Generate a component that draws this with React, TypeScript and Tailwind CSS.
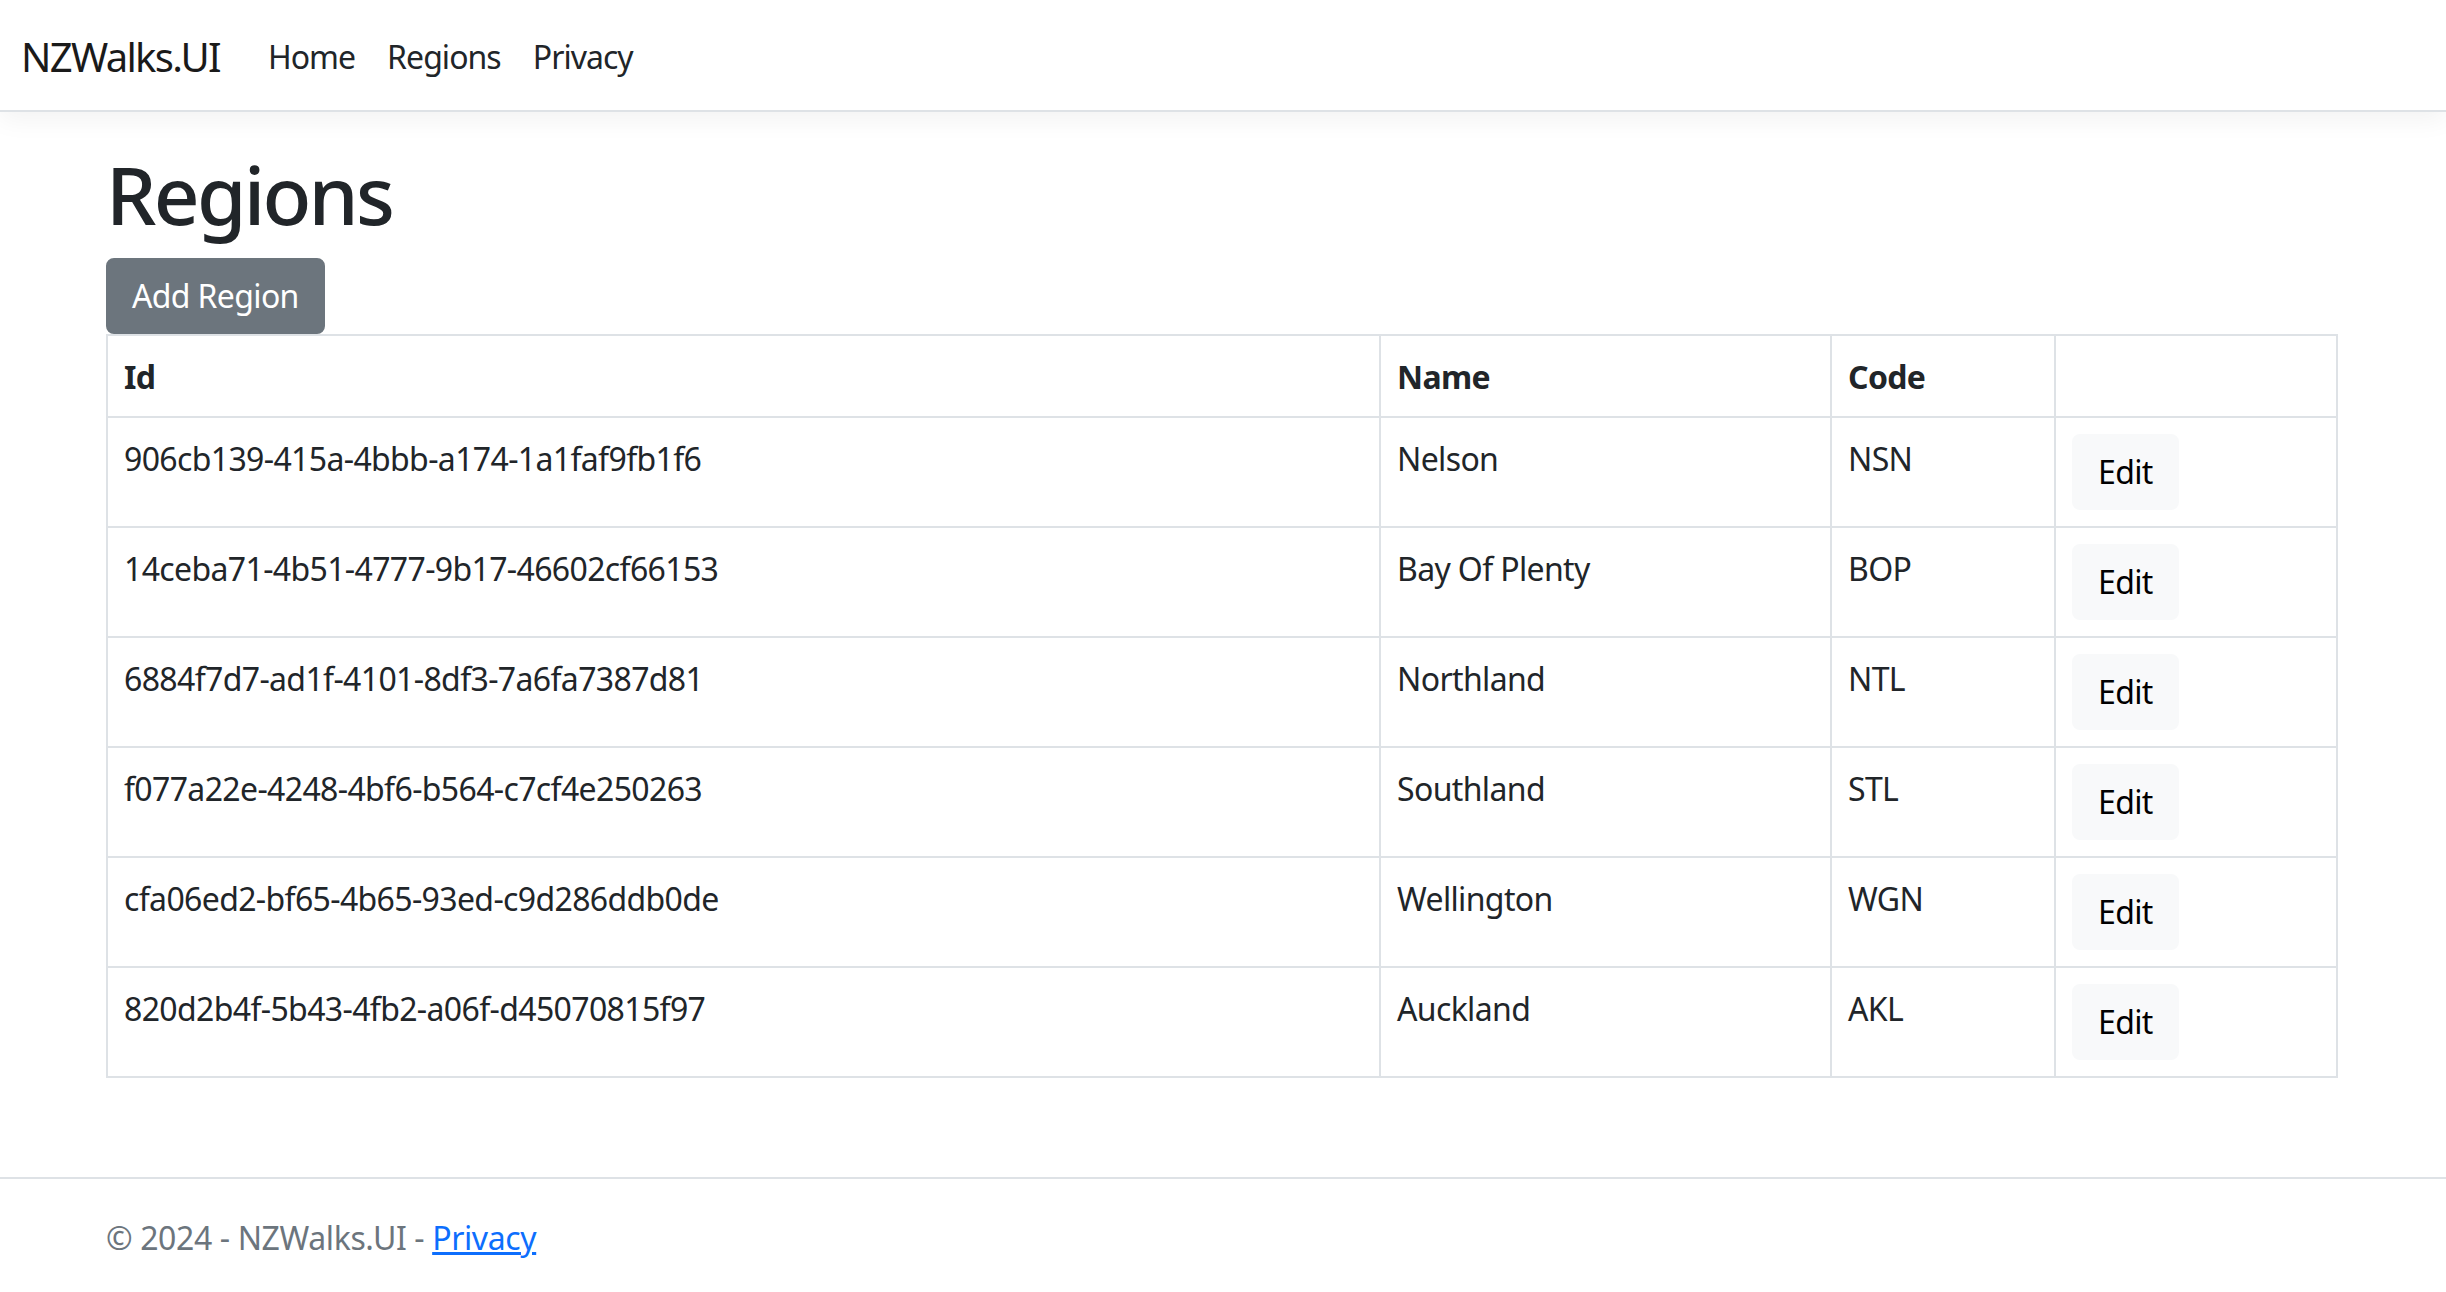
import React from 'react';

type Region = { id: string; name: string; code: string };

const regions: Region[] = [
  { id: '906cb139-415a-4bbb-a174-1a1faf9fb1f6', name: 'Nelson', code: 'NSN' },
  { id: '14ceba71-4b51-4777-9b17-46602cf66153', name: 'Bay Of Plenty', code: 'BOP' },
  { id: '6884f7d7-ad1f-4101-8df3-7a6fa7387d81', name: 'Northland', code: 'NTL' },
  { id: 'f077a22e-4248-4bf6-b564-c7cf4e250263', name: 'Southland', code: 'STL' },
  { id: 'cfa06ed2-bf65-4b65-93ed-c9d286ddb0de', name: 'Wellington', code: 'WGN' },
  { id: '820d2b4f-5b43-4fb2-a06f-d45070815f97', name: 'Auckland', code: 'AKL' },
];

const App: React.FC = () => {
  return (
    <div className="min-h-screen flex flex-col bg-white text-[#212529] font-['Noto_Sans',sans-serif] text-[32px] leading-[48px] tracking-[-0.02em]">
      {/* Top navbar */}
      <header className="h-[112px] shrink-0 flex items-center pt-[3px] pl-[21px] bg-white border-b-2 border-[#dee2e6] shadow-[0_8px_24px_rgba(0,0,0,0.05)]">
        <a href="#" className="text-[40px] leading-[60px] mr-[32px] text-[#1a1a1a] tracking-[-0.042em]">
          NZWalks.UI
        </a>
        <nav className="flex items-center tracking-[-0.03em]">
          <a href="#" className="px-[16px] text-[#212529]">Home</a>
          <a href="#" className="px-[16px] text-[#212529]">Regions</a>
          <a href="#" className="px-[16px] text-[#212529]">Privacy</a>
        </nav>
      </header>

      <main className="pl-[106px] pt-[34px] pb-[32px]">
        <h1 className="text-[80px] leading-[96px] font-medium mb-[16px] tracking-[-0.035em]">Regions</h1>

        <button
          type="button"
          className="h-[76px] px-[24px] bg-[#6c757d] border-2 border-[#6c757d] rounded-[8px] text-white"
        >
          Add Region
        </button>

        <table className="w-[2230px] table-fixed border-collapse">
          <colgroup>
            <col className="w-[1273px]" />
            <col className="w-[451px]" />
            <col className="w-[224px]" />
            <col className="w-[282px]" />
          </colgroup>
          <thead>
            <tr>
              <th className="border-2 border-[#dee2e6] px-[16px] pt-[17px] pb-[15px] text-left align-top font-bold">Id</th>
              <th className="border-2 border-[#dee2e6] px-[16px] pt-[17px] pb-[15px] text-left align-top font-bold">Name</th>
              <th className="border-2 border-[#dee2e6] px-[16px] pt-[17px] pb-[15px] text-left align-top font-bold">Code</th>
              <th className="border-2 border-[#dee2e6] p-[16px]"></th>
            </tr>
          </thead>
          <tbody>
            {regions.map((r) => (
              <tr key={r.id}>
                <td className="border-2 border-[#dee2e6] px-[16px] pt-[17px] pb-[15px] align-top">{r.id}</td>
                <td className="border-2 border-[#dee2e6] px-[16px] pt-[17px] pb-[15px] align-top">{r.name}</td>
                <td className="border-2 border-[#dee2e6] px-[16px] pt-[17px] pb-[15px] align-top">{r.code}</td>
                <td className="border-2 border-[#dee2e6] p-[16px] align-top">
                  <button
                    type="button"
                    className="h-[76px] px-[24px] bg-[#f8f9fa] border-2 border-[#f8f9fa] rounded-[8px] text-black"
                  >
                    Edit
                  </button>
                </td>
              </tr>
            ))}
          </tbody>
        </table>
      </main>

      <footer className="mt-auto border-t-2 border-[#dee2e6] text-[#6c757d] pt-[4px] leading-[109px] pl-[106px] whitespace-nowrap tracking-[-0.012em]">
        © 2024 - NZWalks.UI - <a href="#" className="text-[#0d6efd] underline">Privacy</a>
      </footer>
    </div>
  );
};

export default App;
